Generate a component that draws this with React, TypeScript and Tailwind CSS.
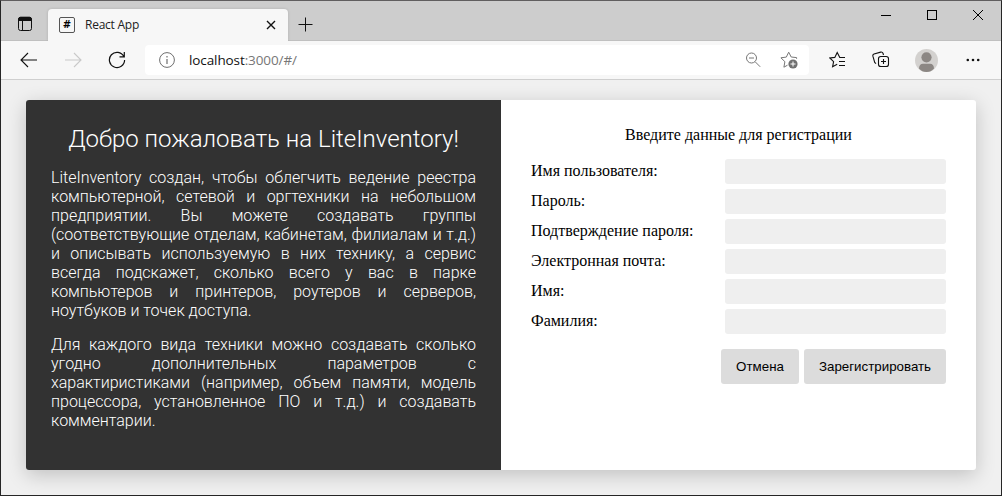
import React from "react";

const fields = [
  "Имя пользователя:",
  "Пароль:",
  "Подтверждение пароля:",
  "Электронная почта:",
  "Имя:",
  "Фамилия:",
];

function TabStrip() {
  return (
    <div className="flex h-10 items-end border-b border-[#c0c0c0] bg-[#cdcdcd]">
      <div className="flex h-8 w-[47px] items-center justify-center">
        <svg className="ml-[1px] h-4 w-4" viewBox="0 0 16 16" fill="none" stroke="#111">
          <rect x="1.5" y="1.5" width="13" height="13" rx="2" />
          <path d="M1.5 4V3.2A2 2 0 0 1 3.5 1.2h9a2 2 0 0 1 2 2V4z" fill="#111" />
          <path d="M1.5 4.5h13M5.5 5v9.5" />
        </svg>
      </div>
      <div className="-mb-px flex h-8 w-60 items-center rounded-t bg-[#f7f7f7] pl-[11px] pr-[11px] shadow-[0_0_3px_rgba(0,0,0,0.15)] [clip-path:inset(-4px_-4px_0_-4px)]">
        <div className="flex h-4 w-4 items-center justify-center rounded-[2px] border border-[#555] font-['DejaVu_Sans',sans-serif] text-[10px] font-bold leading-none text-black">#</div>
        <span className="ml-[10px] font-['Open_Sans',sans-serif] text-[12px] leading-4 tracking-[-0.25px] text-[#222]">React App</span>
        <svg className="ml-auto h-3 w-3" viewBox="0 0 12 12" stroke="#111" strokeWidth="1.4">
          <path d="M2 2l8 8M10 2l-8 8" />
        </svg>
      </div>
      <svg className="mb-[8px] ml-[10px] h-[15px] w-[15px]" viewBox="0 0 15 15" stroke="#111">
        <path d="M7.5 .5v14M.5 7.5h14" />
      </svg>
      <div className="ml-auto flex h-full items-start gap-9 pr-[18px] pt-[9px]">
        <svg className="h-[10px] w-[10px]" viewBox="0 0 10 10" stroke="#000"><path d="M0 5.5h10" /></svg>
        <svg className="h-[10px] w-[10px]" viewBox="0 0 10 10" stroke="#000" fill="none"><rect x=".5" y=".5" width="9" height="9" /></svg>
        <svg className="h-[10px] w-[10px]" viewBox="0 0 10 10" stroke="#000"><path d="M0 0l10 10M10 0L0 10" /></svg>
      </div>
    </div>
  );
}

function Toolbar() {
  return (
    <div className="flex h-[39px] shrink-0 items-center border-b border-[#cfcfcf] bg-[#f7f7f7]">
      <svg className="ml-[19px] h-4 w-[18px]" viewBox="0 0 18 16" fill="none" stroke="#111" strokeWidth="1.1">
        <path d="M17 8H1M8 1L1 8l7 7" />
      </svg>
      <svg className="ml-[26px] h-4 w-[18px]" viewBox="0 0 18 16" fill="none" stroke="#c9c9c9" strokeWidth="1.1">
        <path d="M1 8h16M10 1l7 7-7 7" />
      </svg>
      <svg className="ml-[26px] h-[18px] w-[18px]" viewBox="0 0 18 18" fill="none" stroke="#111" strokeWidth="1.2">
        <path d="M15.8 5.5A7.6 7.6 0 1 0 16.6 9M16.3 1v4.8h-4.8" />
      </svg>
      <div className="ml-[19px] flex h-[30px] w-[664px] items-center rounded bg-white pl-[14px] pr-[11px]">
        <svg className="h-4 w-4" viewBox="0 0 16 16" fill="none" stroke="#6e6e6e">
          <circle cx="8" cy="8" r="7.4" />
          <path d="M8 7v5M8 4v1.5" strokeWidth="1.2" />
        </svg>
        <span className="ml-[14px] font-['Open_Sans',sans-serif] text-[13.5px] leading-5 tracking-[-0.1px] text-[#777]"><span className="text-[#111]">localhost</span>:3000/#/</span>
        <svg className="ml-auto h-4 w-4" viewBox="0 0 16 16" fill="none" stroke="#777">
          <circle cx="6.5" cy="6" r="5" />
          <path d="M4 6h5M10.2 9.8l5 5" />
        </svg>
        <svg className="ml-[19px] h-[18px] w-[18px]" viewBox="0 0 18 18" fill="none" stroke="#777">
          <path d="M16.6 7.8V6.6L11.2 6 8.7 1.2 6.3 6.1.9 6.8l4 3.9-1 5.5 3.6-2" />
          <circle cx="13" cy="13" r="4.6" fill="#707070" stroke="none" />
          <path d="M13 10.5v5M10.5 13h5" stroke="#fff" />
        </svg>
      </div>
      <svg className="ml-[20px] h-[18px] w-[18px]" viewBox="0 0 18 18" fill="none" stroke="#111" strokeWidth="1.1">
        <path d="M10.8 6.5L8.2 1.4 5.8 6.4.8 6.9l3.8 3.7-1 5.1 4.6-2.5M10.3 6.5H16M10 10.5h6M10 14.5h6" />
      </svg>
      <svg className="ml-[25px] h-[18px] w-[18px]" viewBox="0 0 18 18" fill="none" stroke="#111" strokeWidth="1.1">
        <path d="M4 12.6L2.7 11.4.9 5.2Q.5 3.5 2 3L8.7 1.1Q10.3.7 11 2.3L11.5 4" />
        <rect x="6.5" y="5.5" width="10" height="10" rx="2.3" />
        <path d="M11.5 8v5M9 10.5h5" />
      </svg>
      <svg className="ml-[25px] h-[23px] w-[23px]" viewBox="0 0 23 23">
        <circle cx="11.5" cy="11.5" r="11.5" fill="#d3d1cf" />
        <circle cx="11.5" cy="8.3" r="5.1" fill="#8c8784" />
        <path d="M4 19.5Q4.2 14.8 8 14.8h7q3.8 0 4 4.7Q16 23 11.5 23T4 19.5z" fill="#8c8784" />
      </svg>
      <svg className="ml-[28px] h-1 w-[14px]" viewBox="0 0 14 4" fill="#111">
        <circle cx="1.8" cy="2" r="1.3" /><circle cx="7" cy="2" r="1.3" /><circle cx="12.2" cy="2" r="1.3" />
      </svg>
    </div>
  );
}

export default function App() {
  return (
    <div className="flex h-[496px] w-[1002px] flex-col overflow-hidden border border-[#262626] border-t-[#605e5f] bg-[#f0f0f0]">
      <TabStrip />
      <Toolbar />
      <main className="flex-1 overflow-hidden px-[25px] pt-5">
        <div className="flex h-[370px] w-[950px] overflow-hidden rounded-[3px] bg-white shadow-[0_5px_20px_rgba(0,0,0,0.2)]">
          <section className="w-[475px] bg-[#323232] px-[25px] pt-6 font-[Roboto,sans-serif] font-light text-white">
            <h1 className="text-center text-[24px] leading-[30px]">Добро пожаловать на LiteInventory!</h1>
            <p className="mt-[14px] text-justify text-[16px] leading-[19px]">
              LiteInventory создан, чтобы облегчить ведение реестра компьютерной, сетевой и оргтехники на небольшом предприятии. Вы можете создавать группы (соответствующие отделам, кабинетам, филиалам и т.д.) и описывать используемую в них технику, а сервис всегда подскажет, сколько всего у вас в парке компьютеров и принтеров, роутеров и серверов, ноутбуков и точек доступа.
            </p>
            <p className="mt-[15px] text-justify text-[16px] leading-[19px]">
              Для каждого вида техники можно создавать сколько угодно дополнительных параметров с характиристиками (например, объем памяти, модель процессора, установленное ПО и т.д.) и создавать комментарии.
            </p>
          </section>
          <form className="w-[475px] px-[30px] pt-[25px] font-['Liberation_Serif',serif] text-[16px] text-black" onSubmit={(e) => e.preventDefault()}>
            <h2 className="text-center leading-5">Введите данные для регистрации</h2>
            <div className="mt-[14px] flex flex-col gap-[5px]">
              {fields.map((label) => (
                <label key={label} className="flex h-[25px] items-start justify-between">
                  <span className="pt-[3px] leading-[18px]">{label}</span>
                  <input className="h-[25px] w-[221px] rounded-[3px] bg-[#efefef] px-2 outline-none" />
                </label>
              ))}
            </div>
            <div className="mt-[15px] flex justify-end gap-[5px] font-['Liberation_Sans',sans-serif] text-[13.33px]">
              <button type="button" className="h-[35px] w-[78px] rounded-[3px] bg-[#dcdcdc]">Отмена</button>
              <button type="submit" className="h-[35px] w-[142px] rounded-[3px] bg-[#dcdcdc]">Зарегистрировать</button>
            </div>
          </form>
        </div>
      </main>
    </div>
  );
}
